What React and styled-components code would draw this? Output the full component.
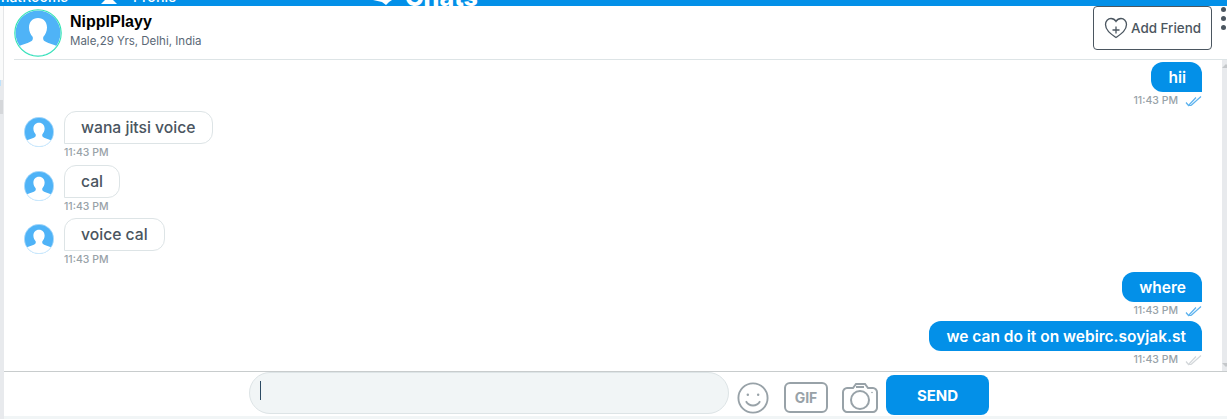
import React from "react";
import styled, { createGlobalStyle } from "styled-components";

const Global = createGlobalStyle`
  html, body { margin: 0; padding: 0; background: #f1f5f6; overflow: hidden; }
  * { box-sizing: border-box; }
  body { font-family: Inter, "Noto Sans", sans-serif; }
`;

const Page = styled.div`
  position: relative;
  width: 1227px;
  height: 419px;
  display: flex;
  flex-direction: column;
  overflow: hidden;
`;

const TopBar = styled.div`
  height: 6px;
  background: #0390e8;
  color: #fff;
  overflow: hidden;
  flex: none;
  position: relative;
`;

const TopLabel = styled.span`
  position: absolute;
  left: ${(p) => p.$x}px;
  bottom: ${(p) => p.$bottom || 2}px;
  font-size: ${(p) => p.$size || 14}px;
  font-weight: ${(p) => p.$weight || 500};
  line-height: 14px;
  white-space: nowrap;
`;

const TopGlyph = styled.svg`
  position: absolute;
  left: ${(p) => p.$x}px;
  top: 0;
`;

const Shell = styled.div`
  flex: 1;
  display: flex;
  min-height: 0;
`;

const LeftGutter = styled.div`
  width: 4px;
  background: #e8eaed;
  flex: none;
  display: flex;
  flex-direction: column;
`;

const GutterTop = styled.div`
  height: 74px;
  background: #fafbfb;
  border-right: 1px solid #e4e6e8;
  flex: none;
`;

const GutterAccent = styled.div`
  height: 6px;
  width: 1px;
  background: #bfe2fb;
  flex: none;
`;

const GutterThumb = styled.div`
  height: 14px;
  width: 3px;
  margin-top: 14px;
  background: #d5d7da;
  flex: none;
`;

const Main = styled.div`
  flex: 1;
  min-width: 0;
  display: flex;
  flex-direction: column;
  background: #fff;
`;

const Header = styled.header`
  height: 54px;
  margin-left: 10px;
  flex: none;
  display: flex;
  align-items: center;
  border-bottom: 1px solid #dde4e6;
  position: relative;
`;

const Identity = styled.div`
  margin-left: 8px;
  margin-top: -3px;
`;

const Name = styled.div`
  font-family: "Liberation Sans", Arial, sans-serif;
  font-weight: 700;
  font-size: 16px;
  line-height: 18px;
  color: #000;
`;

const Meta = styled.div`
  font-size: 11.5px;
  line-height: 15px;
  margin-top: 3px;
  color: #5a6876;
`;

const AddFriend = styled.button`
  position: absolute;
  left: 1079px;
  top: 0;
  width: 119px;
  height: 44px;
  border: 1px solid #4b5660;
  border-radius: 4px;
  background: #fff;
  display: flex;
  align-items: center;
  padding: 0 0 0 10px;
  gap: 3px;
  font: 500 13.4px Inter, sans-serif;
  color: #4b5660;
`;

const Dots = styled.div`
  position: absolute;
  left: 1207px;
  top: 1px;
  display: flex;
  flex-direction: column;
  gap: 4px;
`;

const Dot = styled.i`
  width: 5px;
  height: 5px;
  border-radius: 50%;
  background: #4b5660;
`;

const Body = styled.div`
  flex: 1;
  min-height: 0;
  display: flex;
`;

const Messages = styled.div`
  flex: 1;
  min-width: 0;
  padding: 2px 20px 0 20px;
  display: flex;
  flex-direction: column;
`;

const Scrollbar = styled.div`
  width: 5px;
  background: #e8eaed;
  position: relative;
  flex: none;
`;

const Arrow = styled.i`
  position: absolute;
  left: 0;
  ${(p) => (p.$down ? "bottom: 4px;" : "top: 4px;")}
  border-left: 4px solid transparent;
  border-right: 4px solid transparent;
  ${(p) => (p.$down ? "border-top" : "border-bottom")}: 4px solid #c4c7ca;
`;

const Row = styled.div`
  display: flex;
  flex-direction: column;
  align-items: flex-end;
  margin-top: ${(p) => p.$top || 0}px;
`;

const OutBubble = styled.div`
  height: 30px;
  padding: 0 16px 0 17px;
  display: flex;
  align-items: center;
  background: #0390e8;
  color: #fff;
  border-radius: 12px 12px 0 12px;
  font-size: 15.5px;
  font-weight: 600;
  white-space: nowrap;
`;

const Time = styled.span`
  font-size: 10.5px;
  line-height: 14px;
  font-weight: 500;
  color: #98a2a8;
  white-space: nowrap;
`;

const OutMeta = styled.div`
  display: flex;
  align-items: center;
  gap: 7px;
  height: 16px;
  margin-top: 1px;
`;

const InRow = styled.div`
  display: flex;
  align-items: flex-start;
  margin-top: ${(p) => p.$top || 0}px;
`;

const AvatarSlot = styled.div`
  margin-top: 6px;
  flex: none;
  display: flex;
`;

const InColumn = styled.div`
  margin-left: 10px;
  display: flex;
  flex-direction: column;
`;

const InBubble = styled.div`
  height: 33px;
  padding: 0 16px;
  margin-bottom: 2px;
  display: flex;
  align-items: center;
  align-self: flex-start;
  background: #fff;
  border: 1px solid #dde4e6;
  border-radius: 12px 12px 12px 0;
  color: #4a5560;
  font-size: 15.7px;
  font-weight: 500;
  white-space: nowrap;
`;

const Composer = styled.div`
  height: 45px;
  flex: none;
  background: #fff;
  border-top: 1px solid #c8cccd;
  display: flex;
  align-items: center;
  padding: 0 0 0 245px;
  position: relative;
`;

const InputBox = styled.div`
  width: 480px;
  height: 42px;
  align-self: flex-start;
  border-radius: 21px;
  background: #f1f5f6;
  border: 1px solid #dde4e6;
  display: flex;
  align-items: center;
  padding-left: 10px;
`;

const Caret = styled.i`
  width: 1px;
  height: 19px;
  background: #2c4a63;
  margin-top: -6px;
`;

const Tool = styled.svg`
  margin-left: ${(p) => p.$ml}px;
  margin-top: 7px;
  flex: none;
`;

const GifBox = styled.div`
  margin-left: 15px;
  margin-top: 6px;
  width: 44px;
  height: 31px;
  border: 2px solid #98a2a8;
  border-radius: 6px;
  display: flex;
  align-items: center;
  justify-content: center;
  color: #98a2a8;
  font-size: 14px;
  font-weight: 700;
  flex: none;
`;

const Send = styled.button`
  margin-left: 8px;
  margin-top: 2px;
  width: 103px;
  height: 40px;
  border: 0;
  border-radius: 8px;
  background: #0390e8;
  color: #fff;
  font: 700 15px Inter, sans-serif;
  flex: none;
`;

const Footer = styled.div`
  height: 3px;
  flex: none;
  background: #f1f5f6;
`;

const Ticks = ({ color }) => (
  <svg width="17" height="11" viewBox="0 0 17 11" fill="none" stroke={color} strokeWidth="1.2">
    <path d="M1 6.500 L3.500 9.500 L11 1.500" />
    <path d="M6 9.500 L16 0.500" />
    <path d="M4 9.500 L6 9.500" />
  </svg>
);

const Avatar = ({ size = 30, ring }) => (
  <svg width={size} height={size} viewBox="0 0 48 48" style={{ flex: "none" }}>
    <defs>
      <clipPath id={`c${size}`}><circle cx="24" cy="24" r={ring ? 22.5 : 23.5} /></clipPath>
    </defs>
    <circle cx="24" cy="24" r={ring ? 22.5 : 23.5} fill="#4fb3f7" />
    <g clipPath={`url(#c${size})`}>
      <path d="M24 9c-5.500 0-9 4-9 9.500 0 4 1.600 7 3.600 9.200 .5 1.700 .3 3.400-1 4.300C13 35 5 35.500 2 40v10h44V40c-3-4.500-11-5-15.600-8-1.300-.9-1.500-2.600-1-4.300 2-2.200 3.600-5.200 3.600-9.200C33 13 29.500 9 24 9z" fill="#fff" />
    </g>
    {ring ? (
      <circle cx="24" cy="24" r="23.200" fill="none" stroke="#2fe3b4" strokeWidth="1.100" />
    ) : (
      <circle cx="24" cy="24" r="23.500" fill="none" stroke="#bfe2fb" strokeWidth="1" />
    )}
  </svg>
);

const Incoming = ({ text, top }) => (
  <InRow $top={top}>
    <AvatarSlot><Avatar size={30} /></AvatarSlot>
    <InColumn>
      <InBubble>{text}</InBubble>
      <Time>11:43 PM</Time>
    </InColumn>
  </InRow>
);

const Outgoing = ({ text, top, tick }) => (
  <Row $top={top}>
    <OutBubble>{text}</OutBubble>
    <OutMeta>
      <Time>11:43 PM</Time>
      <Ticks color={tick} />
    </OutMeta>
  </Row>
);

export default function App() {
  return (
    <Page>
      <Global />
      <TopBar>
        <TopLabel $x={1}>hatRooms</TopLabel>
        <TopGlyph $x={100} width="18" height="5" viewBox="0 0 18 5"><path d="M5 0h8l4 4H1z" fill="#fff" /></TopGlyph>
        <TopLabel $x={133}>Profile</TopLabel>
        <TopGlyph $x={372} width="21" height="6" viewBox="0 0 21 6"><path d="M1 0h19l-3 2-3 3-4-3z" fill="#fff" /></TopGlyph>
        <TopLabel $x={405} $size={25} $weight={800} $bottom={2}>Chats</TopLabel>
      </TopBar>
      <Shell>
        <LeftGutter>
          <GutterTop />
          <GutterAccent />
          <GutterThumb />
        </LeftGutter>
        <Main>
          <Header>
            <Avatar size={48} ring />
            <Identity>
              <Name>NipplPlayy</Name>
              <Meta>Male,29 Yrs, Delhi, India</Meta>
            </Identity>
            <AddFriend>
              <svg width="24" height="22" viewBox="0 0 24 22" fill="none" stroke="#4b5660" strokeWidth="1.300">
                <path d="M12 20.500C7 17 1.500 13.500 1.500 7.500 1.500 4 4 1.500 7 1.500c2 0 3.800 1 5 3 1.200-2 3-3 5-3 3 0 5.500 2.500 5.500 6 0 6-5.500 9.500-10.500 13z" />
                <path d="M12 9.500v7M8.500 13h7" />
              </svg>
              Add Friend
            </AddFriend>
            <Dots><Dot /><Dot /><Dot /></Dots>
          </Header>
          <Body>
            <Messages>
              <Outgoing text="hii" tick="#5cb2ee" />
              <Incoming text="wana jitsi voice" top={2} />
              <Incoming text="cal" top={5} />
              <Incoming text="voice cal" top={4} />
              <Outgoing text="where" top={5} tick="#5cb2ee" />
              <Outgoing text="we can do it on webirc.soyjak.st" top={2} tick="#d3d7da" />
            </Messages>
            <Scrollbar><Arrow /><Arrow $down /></Scrollbar>
          </Body>
          <Composer>
            <InputBox><Caret /></InputBox>
            <Tool $ml={8} width="32" height="32" viewBox="0 0 34 34" fill="none" stroke="#98a2a8" strokeWidth="2">
              <circle cx="17" cy="17" r="15.500" />
              <circle cx="11.500" cy="13.500" r="1.300" fill="#98a2a8" stroke="none" />
              <circle cx="22.500" cy="13.500" r="1.300" fill="#98a2a8" stroke="none" />
              <path d="M9.500 20.500c2 3.500 4.500 4.500 7.500 4.500s5.500-1 7.500-4.500" />
            </Tool>
            <GifBox>GIF</GifBox>
            <Tool $ml={14} width="36" height="32" viewBox="0 0 36 32" fill="none" stroke="#98a2a8" strokeWidth="2">
              <path d="M5 6h6l3-4h9l3 4h5c2 0 4 2 4 4v16c0 2-2 4-4 4H5c-2 0-4-2-4-4V10c0-2 2-4 4-4z" />
              <circle cx="18" cy="18" r="9" />
              <path d="M14 5h8" />
              <circle cx="30" cy="10.500" r="0.800" fill="#98a2a8" stroke="none" />
            </Tool>
            <Send>SEND</Send>
          </Composer>
          <Footer />
        </Main>
      </Shell>
    </Page>
  );
}
